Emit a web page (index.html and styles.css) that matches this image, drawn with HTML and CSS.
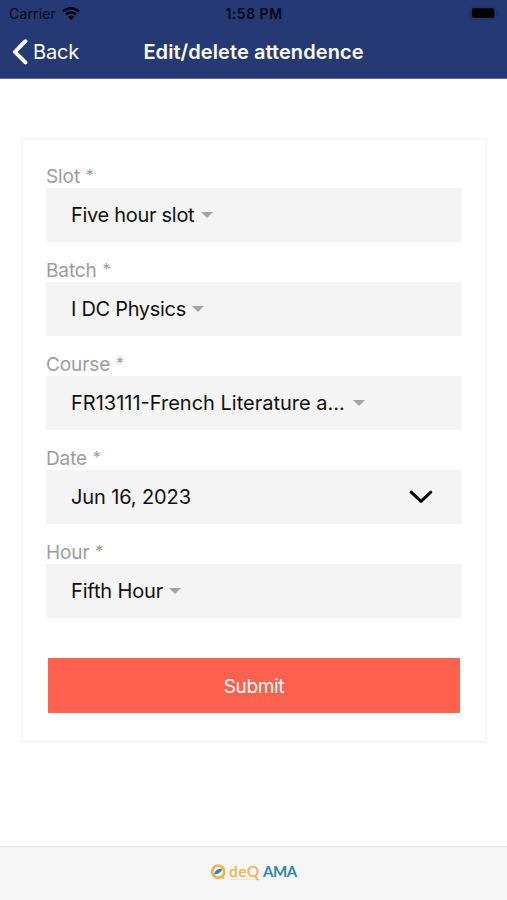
FILE: index.html
```html
<!DOCTYPE html>
<html lang="en">
<head>
<meta charset="utf-8">
<title>Edit/delete attendence</title>
<link rel="stylesheet" href="styles.css">
</head>
<body>
<header class="header">
  <div class="status">
    <span class="carrier"><span class="carrier-name">Carrier</span>
      <svg class="wifi" width="18" height="14" viewBox="0 0 18 14"><path d="M1 4.6Q9-2.2 17 4.6M3.9 7.6Q9 3.3 14.1 7.6" fill="none" stroke="#050914" stroke-width="2.6"/><path d="M5.8 9.8Q9 7.2 12.2 9.8L9 13Z" fill="#050914"/></svg>
    </span>
    <span class="time">1:58 PM</span>
    <svg class="battery" width="30" height="14" viewBox="0 0 30 14"><rect x=".8" y=".8" width="26.4" height="12.4" rx="3.6" fill="none" stroke="#1f3165"/><rect x="2.8" y="2.3" width="22.6" height="9.4" rx="2" fill="#000"/><path d="M28.3 5v4q1.2-.6 1.2-2t-1.2-2" fill="#1b2d5e"/></svg>
  </div>
  <nav class="nav">
    <a class="back"><svg width="16" height="26" viewBox="0 0 16 26"><path d="M13.4 2.2 2.9 12.8l10.5 10.6" fill="none" stroke="#fff" stroke-width="3.9" stroke-linecap="round" stroke-linejoin="round"/></svg><span>Back</span></a>
    <h1 class="title">Edit/delete attendence</h1>
  </nav>
</header>
<main class="main">
  <form class="card">
    <div class="field"><label class="label">Slot <span class="star">*</span></label><div class="select"><span class="v-slot">Five hour slot</span><i class="caret"></i></div></div>
    <div class="field"><label class="label">Batch <span class="star">*</span></label><div class="select"><span class="v-batch">I DC Physics</span><i class="caret"></i></div></div>
    <div class="field"><label class="label">Course <span class="star">*</span></label><div class="select"><span class="v-course">FR13111-French Literature a...</span><i class="caret"></i></div></div>
    <div class="field"><label class="label">Date <span class="star">*</span></label><div class="select date"><span class="v-date">Jun 16, 2023</span><svg width="24" height="15" viewBox="0 0 24 15"><path d="M2.2 2.2 12 11.4l9.8-9.2" fill="none" stroke="#000" stroke-width="3" stroke-linecap="round" stroke-linejoin="round"/></svg></div></div>
    <div class="field"><label class="label">Hour <span class="star">*</span></label><div class="select"><span class="v-hour">Fifth Hour</span><i class="caret"></i></div></div>
    <button class="submit" type="button"><span>Submit</span></button>
  </form>
</main>
<footer class="footer">
  <svg width="16" height="17" viewBox="0 0 16 17"><circle cx="8.2" cy="8.7" r="6" fill="#fff" stroke="#f5b24b" stroke-width="2.8"/><path d="M11 12.4l3 2.8" stroke="#f5b24b" stroke-width="2.6"/><path d="M4 11.5Q4.6 6 12.4 5.4 11.1 11 4 11.5Z" fill="#218bb0"/></svg>
  <span class="brand"><span class="deq">deQ</span><span class="ama">AMA</span></span>
</footer>
</body>
</html>
```
FILE: styles.css
```css
* { box-sizing: border-box; }
body {
  margin: 0;
  height: 900px;
  display: flex;
  flex-direction: column;
  background: #fff;
  color: #111;
  font-family: Inter, "Liberation Sans", sans-serif;
  overflow: hidden;
}
.header {
  height: 79px;
  background: #253a75;
  border-bottom: 1px solid #5b6b9d;
}
.status {
  height: 26px;
  padding: 0 8px 0 9px;
  display: grid;
  grid-template-columns: 1fr auto 1fr;
  align-items: center;
  color: #050914;
  font-size: 14px;
}
.carrier { display: flex; align-items: center; gap: 6px; padding-top: 1px; }
.carrier-name { letter-spacing: 0.15px; }
.time { padding-top: 1px; font-weight: 600; letter-spacing: 0.5px; }
.battery { justify-self: end; }
.nav {
  height: 52px;
  padding: 0 12px;
  display: grid;
  grid-template-columns: 1fr auto 1fr;
  align-items: center;
  color: #fff;
}
.back { display: flex; align-items: center; gap: 5px; font-size: 20px; letter-spacing: -0.2px; }
.title { margin: 0; font-size: 20px; font-weight: 600; letter-spacing: 0.08px; white-space: nowrap; }
.main { flex: 1; padding: 59px 20px 0 21px; }
.card {
  height: 605px;
  border: 2px solid #f6f6f6;
  padding: 24px 23px 0;
  display: flex;
  flex-direction: column;
}
.field { height: 94px; }
.label {
  display: block;
  height: 24px;
  line-height: 26px;
  color: #9b9da0;
  font-size: 19px;
  letter-spacing: -0.1px;
}
.star { margin-left: 0.5px; font-size: 16px; line-height: 1; vertical-align: 2px; }
.select {
  height: 54px;
  padding: 0 28px 0 25px;
  display: flex;
  align-items: center;
  gap: 7px;
  background: #f4f4f4;
  font-size: 20px;
  letter-spacing: -0.3px;
  white-space: nowrap;
}
.v-batch { margin-right: -1px; }
.v-course { margin-right: 1px; letter-spacing: 0; }
.v-date { letter-spacing: -0.12px; }
.v-hour { letter-spacing: -0.15px; margin-right: -1px; }
.date { justify-content: space-between; padding-right: 29px; }
.caret {
  border: 6px solid transparent;
  border-top-color: #a3a3a3;
  border-bottom: 0;
}
.submit {
  height: 55px;
  margin: 24px 2px 0;
  padding: 2px 0 0;
  border: 0;
  background: #ff614f;
  color: #fff;
  font-family: inherit;
  font-size: 19px;
  letter-spacing: -0.35px;
}
.footer {
  height: 54px;
  padding: 0 0 4px;
  display: flex;
  align-items: center;
  justify-content: center;
  gap: 3px;
  background: #f6f6f6;
  border-top: 1px solid #e6e6e6;
}
.brand { display: flex; gap: 3px; font-family: Lato, sans-serif; font-size: 15px; line-height: 16px; }
.deq { color: #f2b04c; font-weight: 400; letter-spacing: 0.8px; border-bottom: 1px solid #fbe3c2; -webkit-text-stroke: 0.3px #f2b04c; }
.ama { color: #258bae; font-weight: 700; letter-spacing: -0.4px; }
```
